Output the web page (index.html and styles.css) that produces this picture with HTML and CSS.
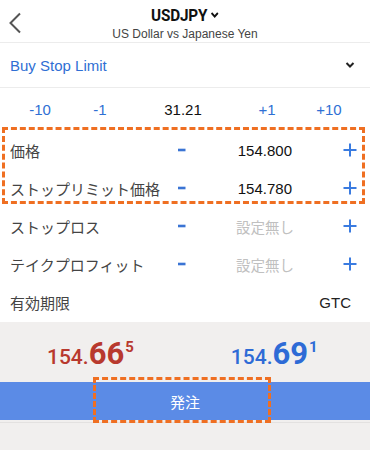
FILE: index.html
```html
<!DOCTYPE html>
<html>
<head>
<meta charset="utf-8">
<link rel="stylesheet" href="styles.css">
</head>
<body>
<div class="page">
  <header class="header">
    <svg class="back" width="14" height="22" viewBox="0 0 14 22"><path d="M12 1.5 L2.5 11 L12 20.5" fill="none" stroke="#555" stroke-width="2"/></svg>
    <div class="title">USDJPY<svg class="tchev" width="10" height="8" viewBox="0 0 10 8"><path d="M1.5 2 L5 5.5 L8.5 2" fill="none" stroke="#111" stroke-width="2"/></svg></div>
    <div class="subtitle">US Dollar vs Japanese Yen</div>
  </header>
  <div class="ordertype">
    <span class="otext">Buy Stop Limit</span>
    <svg width="10" height="8" viewBox="0 0 10 8"><path d="M1.5 2 L5 5.5 L8.5 2" fill="none" stroke="#222" stroke-width="2"/></svg>
  </div>
  <div class="steps">
    <span class="step">-10</span>
    <span class="step">-1</span>
    <span class="step dark">31.21</span>
    <span class="step">+1</span>
    <span class="step">+10</span>
  </div>
  <div class="row">
    <span class="label">価格</span>
    <svg class="minus" width="10" height="4" viewBox="0 0 10 4"><rect x="1" y="0.7" width="7.5" height="2.6" fill="#3a74d4"/></svg>
    <span class="value">154.800</span>
    <svg class="plus" width="16" height="16" viewBox="0 0 16 16"><path d="M8 1.5 V14.5 M1.5 8 H14.5" stroke="#3a7be0" stroke-width="2"/></svg>
  </div>
  <div class="row">
    <span class="label">ストップリミット価格</span>
    <svg class="minus" width="10" height="4" viewBox="0 0 10 4"><rect x="1" y="0.7" width="7.5" height="2.6" fill="#3a74d4"/></svg>
    <span class="value">154.780</span>
    <svg class="plus" width="16" height="16" viewBox="0 0 16 16"><path d="M8 1.5 V14.5 M1.5 8 H14.5" stroke="#3a7be0" stroke-width="2"/></svg>
  </div>
  <div class="row">
    <span class="label">ストップロス</span>
    <svg class="minus" width="10" height="4" viewBox="0 0 10 4"><rect x="1" y="0.7" width="7.5" height="2.6" fill="#3a74d4"/></svg>
    <span class="value muted">設定無し</span>
    <svg class="plus" width="16" height="16" viewBox="0 0 16 16"><path d="M8 1.5 V14.5 M1.5 8 H14.5" stroke="#3a7be0" stroke-width="2"/></svg>
  </div>
  <div class="row">
    <span class="label">テイクプロフィット</span>
    <svg class="minus" width="10" height="4" viewBox="0 0 10 4"><rect x="1" y="0.7" width="7.5" height="2.6" fill="#3a74d4"/></svg>
    <span class="value muted">設定無し</span>
    <svg class="plus" width="16" height="16" viewBox="0 0 16 16"><path d="M8 1.5 V14.5 M1.5 8 H14.5" stroke="#3a7be0" stroke-width="2"/></svg>
  </div>
  <div class="row expiry">
    <span class="label">有効期限</span>
    <span class="gtc">GTC</span>
  </div>
  <div class="bottom">
    <div class="prices">
      <div class="price sell"><span class="small">154.</span><span class="big">66</span><sup class="sup">5</sup></div>
      <div class="price buy"><span class="small">154.</span><span class="big">69</span><sup class="sup">1</sup></div>
    </div>
    <div class="order">発注</div>
    <div class="foot"></div>
  </div>
  <div class="mark mark-price"></div>
  <div class="mark mark-button"></div>
</div>
</body>
</html>
```
FILE: styles.css
```css
html, body {
  margin: 0;
  padding: 0;
  background: #fff;
}
.page {
  position: relative;
  width: 370px;
  height: 450px;
  overflow: hidden;
  font-family: "Liberation Sans", "Noto Sans CJK JP", sans-serif;
  color: #333;
}
.header {
  position: relative;
  height: 42px;
  border-bottom: 1px solid #ececec;
  text-align: center;
}
.back {
  position: absolute;
  left: 8px;
  top: 12px;
}
.title {
  padding-top: 5px;
  font-family: "Roboto", "Liberation Sans", sans-serif;
  font-weight: 700;
  font-size: 17px;
  line-height: 20px;
  color: #111;
  letter-spacing: -0.2px;
  transform: scaleX(0.9);
}
.tchev {
  margin-left: 3px;
  vertical-align: 2px;
}
.subtitle {
  font-size: 12px;
  line-height: 14px;
  margin-top: 2px;
  color: #444;
}
.ordertype {
  height: 44px;
  border-bottom: 1px solid #ececec;
  display: flex;
  align-items: center;
  justify-content: space-between;
  padding: 0 15px 0 10px;
}
.otext {
  font-size: 15px;
  color: #2f6fd4;
}
.steps {
  height: 43px;
  display: grid;
  grid-template-columns: 80px 40px 126px 42px 82px;
  align-items: center;
  justify-items: center;
  font-size: 15px;
  color: #2f6fd4;
}
.step.dark {
  color: #111;
}
.row {
  height: 38px;
  display: flex;
  align-items: center;
  padding: 0 12px 0 10px;
}
.label {
  width: 167px;
  font-family: "Noto Sans CJK JP", sans-serif;
  font-size: 15px;
  color: #444;
  white-space: nowrap;
}
.minus {
  display: block;
}
.value {
  width: 96px;
  text-align: right;
  font-size: 15px;
  color: #111;
  margin-left: 9px;
  white-space: nowrap;
}
.value.muted {
  font-family: "Noto Sans CJK JP", sans-serif;
  color: #c0c0c0;
  font-size: 14.5px;
  text-align: left;
  padding-left: 40px;
  box-sizing: border-box;
}
.plus {
  margin-left: auto;
  display: block;
}
.expiry {
  justify-content: space-between;
  padding-right: 19px;
}
.gtc {
  font-size: 15px;
  color: #222;
}
.bottom {
  margin-top: 1px;
  background: #f1efee;
  height: 128px;
}
.prices {
  height: 60px;
  display: flex;
}
.price {
  font-family: "Roboto", "Liberation Sans", sans-serif;
  font-weight: 700;
  white-space: nowrap;
  padding-top: 17px;
  line-height: 30px;
}
.sell {
  color: #b8392e;
  margin-left: 47px;
}
.buy {
  color: #2e6bd6;
  margin-left: 97px;
}
.small {
  font-size: 21px;
  font-weight: 500;
}
.big {
  font-size: 31px;
}
.sup {
  font-size: 15px;
  vertical-align: 12px;
  line-height: 0;
  margin-left: 1px;
}
.order {
  height: 38px;
  background: #5b8be6;
  color: #fff;
  font-family: "Noto Sans CJK JP", sans-serif;
  font-size: 15px;
  display: flex;
  align-items: center;
  justify-content: center;
}
.foot {
  height: 2px;
  border-bottom: 1px solid #e3e1e0;
}
.mark {
  position: absolute;
  border: 3px dashed #ef6f22;
  box-sizing: border-box;
}
.mark-price {
  left: 2px;
  top: 127px;
  width: 363px;
  height: 77px;
}
.mark-button {
  left: 93px;
  top: 377px;
  width: 178px;
  height: 46px;
}
```
